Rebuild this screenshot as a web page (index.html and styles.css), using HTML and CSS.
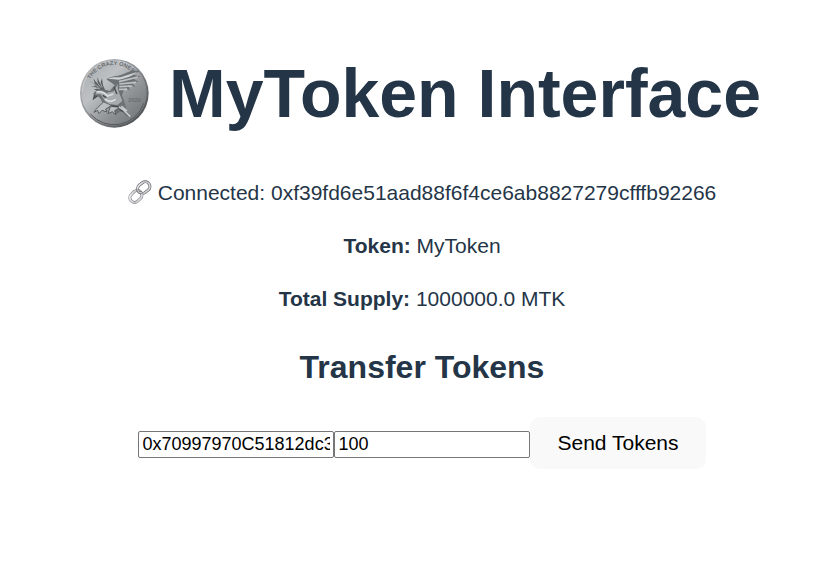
FILE: index.html
```html
<!DOCTYPE html>
<html lang="en">
<head>
<meta charset="utf-8">
<title>MyToken Interface</title>
<link rel="stylesheet" href="styles.css">
</head>
<body>
<main class="app">
  <h1 class="title">
    <svg class="coin" viewBox="30 30 210 210" aria-hidden="true">
      <defs>
        <linearGradient id="rim" x1="0" y1="0" x2="1" y2="1"><stop offset="0" stop-color="#c8cacc"/><stop offset=".5" stop-color="#85898c"/><stop offset="1" stop-color="#3c4043"/></linearGradient>
        <linearGradient id="face" x1="0" y1="0" x2="1" y2="1"><stop offset="0" stop-color="#a6a9ac"/><stop offset=".35" stop-color="#bec1c3"/><stop offset=".65" stop-color="#8d9194"/><stop offset="1" stop-color="#686c70"/></linearGradient>
        <path id="arc" d="M64 94A80 80 0 0 1 206 94"/>
      </defs>
      <circle cx="136" cy="136" r="103" fill="url(#rim)"/>
      <circle cx="135" cy="135" r="98" fill="url(#face)"/>
      <path d="M40 130A96 96 0 0 1 200 64" fill="none" stroke="#d5d7d9" stroke-width="2"/>
      <path d="M64 198A94 94 0 0 0 224 166" fill="none" stroke="#54585b" stroke-width="3"/>
      <text class="coin-text"><textPath href="#arc">THE CRAZY ONES</textPath></text>
      <text class="coin-text" x="178" y="162">2020</text>
      <path d="M62 98L78 107L73 92L86 105L85 88L94 105L99 91L102 112L108 125L91 132L74 124L87 122L67 115L80 113Z" fill="#5b6064"/>
      <path d="M66 101L91 119M78 96L96 119M89 94L100 118M71 116L93 123" fill="none" stroke="#c9cccd" stroke-width="2"/>
      <path d="M112 94C127 82 145 86 158 80L190 67L212 69L193 80L215 86L194 92L209 102L187 101L199 117L177 110L183 128L168 118L159 142L166 160L172 185L187 209L171 204L158 190L140 199L122 178L103 171L96 154L85 143L76 150L73 136L84 126L103 124L122 129L137 111Z" fill="#6c7175"/>
      <path d="M117 92C136 84 148 92 166 84L204 72C190 84 169 92 149 95Z" fill="#cfd2d3"/>
      <path d="M150 101L207 87M151 108L201 103M151 116L190 114M150 124L174 124" fill="none" stroke="#bfc2c4" stroke-width="5"/>
      <path d="M79 139C84 126 99 128 112 135L134 130L147 107C143 127 156 143 160 159L145 171L121 168L108 160L95 139Z" fill="#a7abae"/>
      <path d="M82 132C97 128 107 134 115 144L133 138M108 153C119 163 130 161 140 154" fill="none" stroke="#dcdfe0" stroke-width="5"/>
      <path d="M77 141L74 152L86 143M101 142L112 149M135 118L144 138M120 173L145 176L162 191" fill="none" stroke="#43484c" stroke-width="4"/>
      <path d="M102 163C90 177 80 181 75 193L86 187L90 197L99 187L114 192L110 183L127 173M124 176L117 197L130 191L141 201L137 188L151 179" fill="#babec0" stroke="#595e62" stroke-width="3"/>
      <path d="M150 177L163 185L184 206M157 174L174 189" fill="none" stroke="#c7cacc" stroke-width="5"/>
    </svg>
    <span>MyToken Interface</span>
  </h1>
  <p class="line"><svg class="link" viewBox="25 29 72 72" aria-hidden="true">
    <defs><linearGradient id="steel" x1="0" y1="0" x2="1" y2="1"><stop offset="0" stop-color="#f4f4f6"/><stop offset=".5" stop-color="#c3c4c8"/><stop offset="1" stop-color="#e6e6ea"/></linearGradient></defs>
    <g fill="none">
      <rect x="53" y="38" width="39" height="28" rx="14" transform="rotate(-38 72 52)" stroke="#66636a" stroke-width="9"/>
      <rect x="53" y="38" width="39" height="28" rx="14" transform="rotate(-38 72 52)" stroke="url(#steel)" stroke-width="5"/>
      <rect x="29" y="64" width="39" height="28" rx="14" transform="rotate(-45 49 78)" stroke="#77757b" stroke-width="9"/>
      <rect x="29" y="64" width="39" height="28" rx="14" transform="rotate(-45 49 78)" stroke="url(#steel)" stroke-width="6"/>
      <path d="M54 57C54 64 59 68 67 67" stroke="#66636a" stroke-width="8"/>
      <path d="M54 57C54 64 59 68 67 67" stroke="#cdced2" stroke-width="4"/>
    </g>
  </svg>Connected: 0xf39fd6e51aad88f6f4ce6ab8827279cfffb92266</p>
  <p class="line"><strong>Token:</strong> MyToken</p>
  <p class="line"><strong>Total Supply:</strong> 1000000.0 MTK</p>
  <h2 class="subtitle">Transfer Tokens</h2>
  <form class="transfer">
    <input class="field" type="text" aria-label="Recipient address" value="0x70997970C51812dc3A010C7d01b50e0d17dc79C8">
    <input class="field" type="text" aria-label="Amount" value="100">
    <button class="send" type="button">Send Tokens</button>
  </form>
</main>
</body>
</html>
```
FILE: styles.css
```css
body {
  margin: 0;
  background: #fff;
  color: #243547;
  font-family: "Liberation Sans", Arial, sans-serif;
  font-size: 21px;
  line-height: 32px;
}
.app {
  padding: 58px 0 0 14px;
  text-align: center;
}
.title {
  display: flex;
  justify-content: center;
  align-items: center;
  gap: 20px;
  margin: 0 0 49px;
  font-size: 68px;
  line-height: 70px;
  white-space: nowrap;
}
.coin { width: 70px; height: 70px; margin-left: -4px; flex: none; }
.coin-text { fill: #6a6f73; font-size: 17px; font-weight: 700; }
.line { margin: 0 0 21px; }
.link { width: 24px; height: 24px; margin-right: 6px; vertical-align: -4px; }
.subtitle { margin: 30px 0 28px; font-size: 32px; line-height: 44px; }
.transfer { display: flex; justify-content: center; align-items: baseline; }
.field {
  box-sizing: border-box;
  width: 196px;
  height: 27px;
  padding: 1px 3px;
  border: 1px solid #767676;
  border-radius: 2px;
  background: #fff;
  color: #000;
  font: 18px "Liberation Sans", Arial, sans-serif;
}
.send {
  padding: 10px 27px;
  border: 0;
  border-radius: 10px;
  background: #f9f9f9;
  color: #000;
  font: 21px/32px "Liberation Sans", Arial, sans-serif;
}
```
